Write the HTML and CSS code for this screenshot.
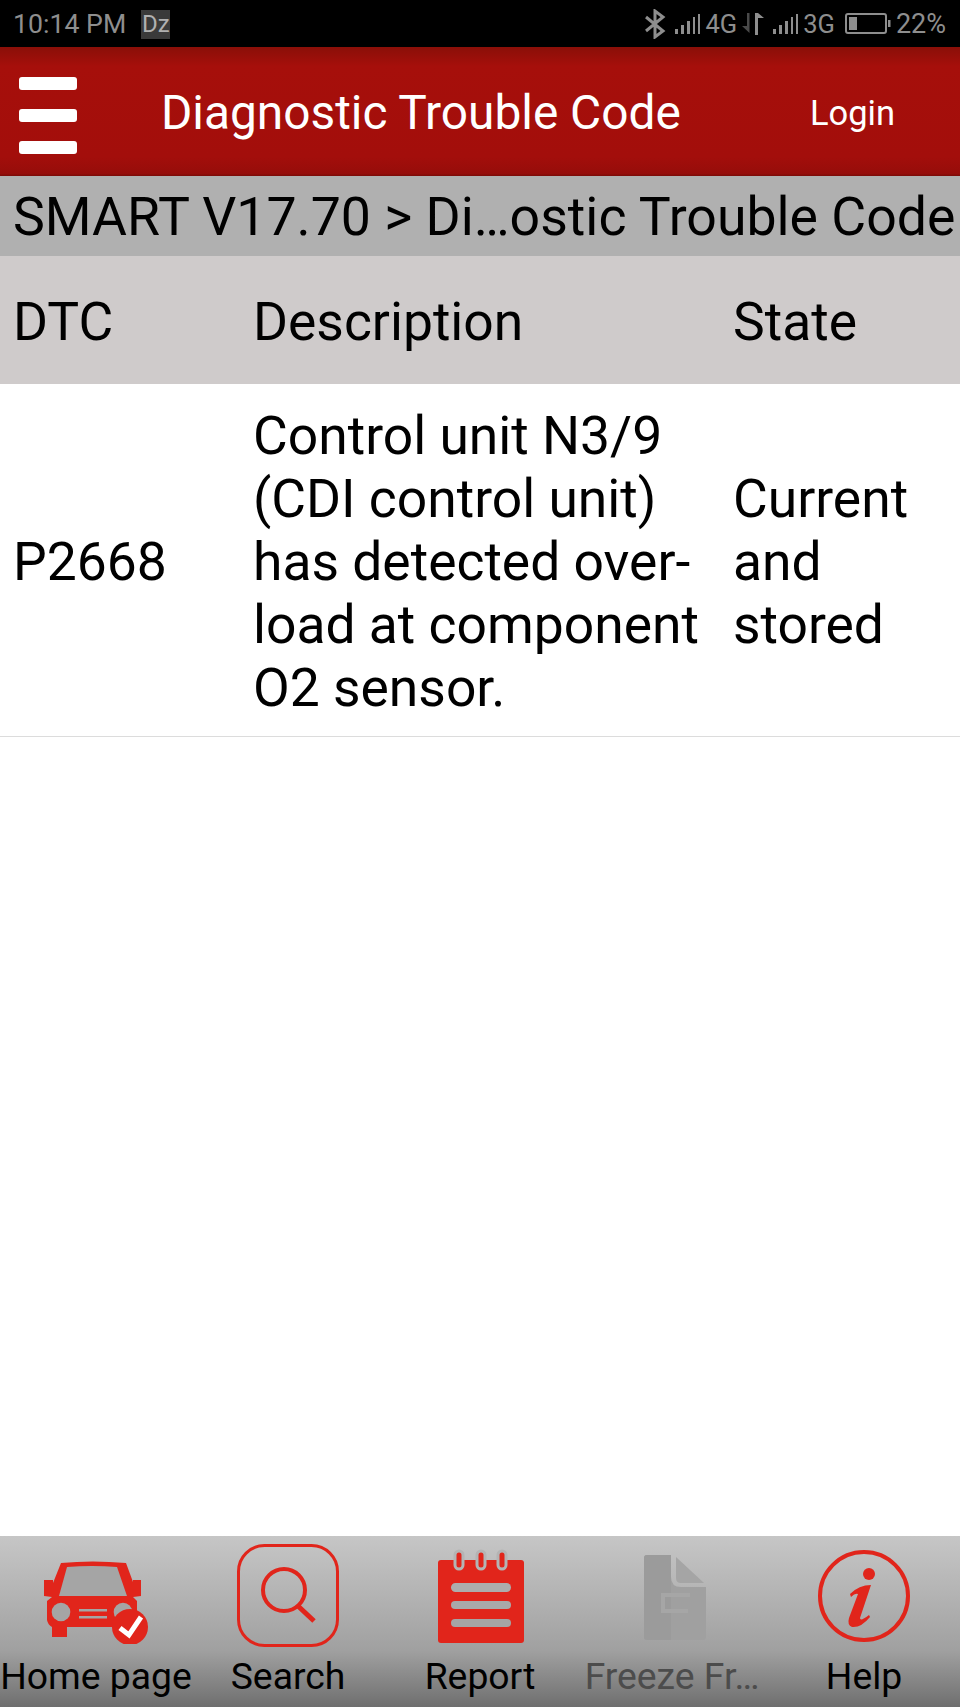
FILE: index.html
```html
<!DOCTYPE html>
<html lang="en">
<head>
  <meta charset="UTF-8">
  <meta name="viewport" content="width=device-width, initial-scale=1.0">
  <title>Diagnostic Trouble Code</title>
  <link rel="stylesheet" href="styles.css">
</head>
<body>
  <div class="app">
    <!-- Status bar -->
    <div class="status-bar">
      <div class="status-left">
        <span class="clock">10:14 PM</span>
        <span class="dz">Dz</span>
      </div>
      <div class="status-right">
        <svg class="bt" width="22" height="30" viewBox="0 0 22 30">
          <path d="M2 8 L19 22 L11 28 V2 L19 8 L2 22" fill="none" stroke="#8e8e8e" stroke-width="3"/>
        </svg>
        <svg class="signal" width="25" height="22" viewBox="0 0 25 22">
          <g fill="#8e8e8e">
            <rect x="0" y="16" width="3" height="5"/>
            <rect x="6" y="12" width="3" height="9"/>
            <rect x="12" y="8" width="3" height="13"/>
            <rect x="18" y="4" width="2" height="17"/>
            <rect x="23" y="1" width="2" height="20"/>
          </g>
        </svg>
        <span class="net">4G</span>
        <svg class="arrows" width="24" height="22" viewBox="0 0 24 22">
          <path d="M7 0 H9.500 V20 L2 13 H7 Z" fill="#4a4a4a"/>
          <path d="M15 22 H18 V5 H24 L18 0 H15 Z" fill="#8e8e8e"/>
        </svg>
        <svg class="signal" width="25" height="22" viewBox="0 0 25 22">
          <g fill="#8e8e8e">
            <rect x="0" y="16" width="3" height="5"/>
            <rect x="6" y="12" width="3" height="9"/>
            <rect x="12" y="8" width="3" height="13"/>
            <rect x="18" y="4" width="2" height="17"/>
            <rect x="23" y="1" width="2" height="20"/>
          </g>
        </svg>
        <span class="net">3G</span>
        <svg class="battery" width="46" height="22" viewBox="0 0 46 22">
          <rect x="1" y="1" width="40" height="19" rx="2" fill="none" stroke="#8e8e8e" stroke-width="2"/>
          <rect x="4" y="4" width="8" height="13" fill="#8e8e8e"/>
          <rect x="43" y="7" width="2.500" height="7" fill="#8e8e8e"/>
        </svg>
        <span class="pct">22%</span>
      </div>
    </div>

    <!-- Title bar -->
    <div class="title-bar">
      <div class="menu-btn">
        <span></span>
        <span></span>
        <span></span>
      </div>
      <div class="title">Diagnostic Trouble Code</div>
      <div class="login">Login</div>
    </div>

    <div class="breadcrumb">SMART V17.70 &gt; Di…ostic Trouble Code</div>

    <!-- DTC table -->
    <div class="dtc-row dtc-head">
      <div>DTC</div>
      <div>Description</div>
      <div>State</div>
    </div>
    <div class="dtc-row dtc-item">
      <div>P2668</div>
      <div>Control unit N3/9<br>(CDI control unit)<br>has detected over-<br>load at component<br>O2 sensor.</div>
      <div>Current<br>and<br>stored</div>
    </div>
    <div class="spacer"></div>

    <!-- Bottom tabs -->
    <div class="tab-bar">
      <div class="tab">
        <div class="tab-icon">
          <svg width="104" height="98" viewBox="0 -14 104 98">
            <path fill="#e1251b" d="M17 3 Q48 0 82 3 L89 22 V20 H97 V36 L89 37 L93 41 V62 Q84 67 70 67 H23 V77 H8 V67 Q4 65 3 60 V41 L8 37 L0 36 V20 H9 V23 Z"/>
            <path fill="#a5a5a5" d="M23 7 Q48 5 73 7 L83 36 H15 Z"/>
            <circle cx="17" cy="52" r="9.300" fill="#a5a5a5"/>
            <circle cx="79" cy="52" r="9.300" fill="#a5a5a5"/>
            <rect x="35" y="49" width="28" height="2.500" fill="#a5a5a5"/>
            <rect x="35" y="56" width="28" height="2.500" fill="#a5a5a5"/>
            <circle cx="86" cy="67" r="18" fill="#e1251b"/>
            <path d="M76 68 L85 75 L97 57" fill="none" stroke="#fff" stroke-width="5"/>
          </svg>
        </div>
        <div class="tab-label">Home page</div>
      </div>
      <div class="tab">
        <div class="tab-icon">
          <svg width="102" height="103" viewBox="0 0 102 103">
            <rect x="1.500" y="1.500" width="99" height="100" rx="26" fill="none" stroke="#e1251b" stroke-width="3"/>
            <circle cx="47" cy="46" r="21" fill="none" stroke="#e1251b" stroke-width="4"/>
            <path d="M61 62 L77 77" fill="none" stroke="#e1251b" stroke-width="5"/>
          </svg>
        </div>
        <div class="tab-label">Search</div>
      </div>
      <div class="tab">
        <div class="tab-icon">
          <svg width="88" height="96" viewBox="-2 -4 88 96">
            <rect x="0" y="9" width="86" height="83" rx="3" fill="#e1251b"/>
            <rect x="17" y="0" width="8" height="18" rx="4" fill="#e1251b" stroke="#b4b4b4" stroke-width="3"/>
            <rect x="39" y="0" width="8" height="18" rx="4" fill="#e1251b" stroke="#b4b4b4" stroke-width="3"/>
            <rect x="60" y="0" width="8" height="18" rx="4" fill="#e1251b" stroke="#b4b4b4" stroke-width="3"/>
            <rect x="13" y="32" width="60" height="9" rx="4.500" fill="#adadad"/>
            <rect x="13" y="50" width="60" height="8" rx="4" fill="#a9a9a9"/>
            <rect x="13" y="68" width="60" height="8" rx="4" fill="#a5a5a5"/>
          </svg>
        </div>
        <div class="tab-label">Report</div>
      </div>
      <div class="tab">
        <div class="tab-icon">
          <svg width="68" height="89" viewBox="-6 -4 68 89">
            <path fill="#a0a0a0" d="M3 0 H27 V22 Q27 32 37 32 H62 V82 Q62 85 59 85 H3 Q0 85 0 82 V3 Q0 0 3 0 Z"/>
            <path fill="#9b9b9b" d="M3 0 H27 V85 H3 Q0 85 0 82 V3 Q0 0 3 0 Z"/>
            <path fill="#a5a5a5" d="M32 2 L60 28 H37 Q32 28 32 23 Z"/>
            <path fill="none" stroke="#a6a6a6" stroke-width="4" d="M19 58 V40 H46 M19 56 H44"/>
          </svg>
        </div>
        <div class="tab-label disabled">Freeze Fr…</div>
      </div>
      <div class="tab">
        <div class="tab-icon">
          <svg width="94" height="98" viewBox="0 -4 94 98">
            <circle cx="47" cy="46" r="44" fill="none" stroke="#e1251b" stroke-width="4"/>
            <circle cx="52" cy="24" r="6" fill="#e1251b"/>
            <path fill="#e1251b" d="M33 44 Q42 35 54 35 L43 68 Q43 72 52 65 L53 67 Q44 78 35 77 Q30 75 32 68 L41 44 Q38 43 34 47 Z"/>
          </svg>
        </div>
        <div class="tab-label">Help</div>
      </div>
    </div>
  </div>
</body>
</html>
```

FILE: styles.css
```css
:root {
  --red: #e1251b;
  --grey: #8e8e8e;
}

* {
  box-sizing: border-box;
}

html, body {
  margin: 0;
  padding: 0;
  height: 100%;
}

body {
  font-family: Roboto, 'Liberation Sans', sans-serif;
  background-color: #fff;
  color: #000;
  overflow: hidden;
}

.app {
  display: flex;
  flex-direction: column;
  height: 1707px;
}

.status-bar {
  height: 47px;
  background-color: #000;
  color: var(--grey);
  display: flex;
  align-items: center;
  justify-content: space-between;
  padding: 1px 14px 0 13px;
  font-size: 27px;
}

.status-left {
  display: flex;
  align-items: center;
  gap: 15px;
}

.clock {
  font-size: 26.700px;
}

.dz {
  background-color: #3a3a3a;
  color: #b0b0b0;
  width: 29px;
  height: 29px;
  display: flex;
  align-items: center;
  justify-content: center;
  font-size: 24px;
}

.status-right {
  display: flex;
  align-items: center;
  gap: 5px;
}

.status-right .net {
  font-size: 25.500px;
}

.status-right .signal {
  margin-left: 4px;
}

.status-right .arrows {
  margin-left: -2px;
}

.status-right .battery {
  margin-left: 5px;
}

.title-bar {
  height: 129px;
  padding-top: 2px;
  background: linear-gradient(180deg, #8a0f08 0%, #a60f0b 15%, #a30e0b 85%, #960d0a 98%, #7a0b07 100%);
  color: #fff;
  display: flex;
  align-items: center;
}

.menu-btn {
  width: 58px;
  height: 77px;
  margin-left: 19px;
  margin-top: 5px;
  display: flex;
  flex-direction: column;
  justify-content: space-between;
}

.menu-btn span {
  display: block;
  height: 13px;
  background-color: #fff;
  border-radius: 3px;
}

.title {
  font-size: 47.800px;
  margin-left: 84px;
  white-space: nowrap;
}

.login {
  font-size: 34.500px;
  margin-left: auto;
  margin-right: 65px;
}

.breadcrumb {
  height: 80px;
  background-color: #b0b0b0;
  font-size: 53.600px;
  line-height: 82px;
  padding-left: 13px;
  white-space: nowrap;
}

.dtc-row {
  display: grid;
  grid-template-columns: 240px 480px 240px;
  align-items: center;
  font-size: 53.400px;
  line-height: 63px;
  padding: 2px 0 0 13px;
}

.dtc-head {
  height: 128px;
  background-color: #cfcbcb;
}

.dtc-item {
  height: 353px;
  border-bottom: 1px solid #dcdcdc;
}

.spacer {
  flex: 1;
}

.tab-bar {
  height: 171px;
  background: linear-gradient(180deg, #c6c6c6 0%, #b0b0b0 40%, #a0a0a0 67%, #7e7e7e 90%, #6e6e6e 100%);
  display: grid;
  grid-template-columns: repeat(5, 1fr);
}

.tab {
  display: flex;
  flex-direction: column;
  align-items: center;
}

.tab-icon {
  height: 118px;
  display: flex;
  align-items: center;
  justify-content: center;
}

.tab-label {
  font-size: 37.300px;
  line-height: 44px;
  white-space: nowrap;
}

.tab-label.disabled {
  color: #4c4c4c;
}
```
